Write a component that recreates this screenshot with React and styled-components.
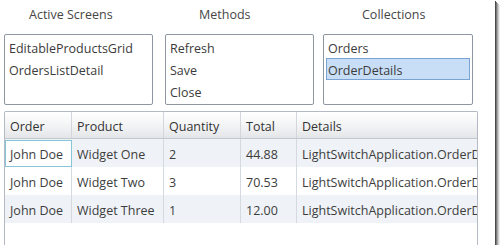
import React from "react";
import styled, { createGlobalStyle } from "styled-components";

const GlobalStyle = createGlobalStyle`
  body {
    margin: 0;
    background: #ffffff;
    font-family: "Open Sans", "Segoe UI", sans-serif;
    color: #3b3b3b;
  }
`;

const screens = ["EditableProductsGrid", "OrdersListDetail"];
const methods = ["Refresh", "Save", "Close"];
const collections = ["Orders", "OrderDetails"];

const columns = ["Order", "Product", "Quantity", "Total", "Details"];
const rows = [
  ["John Doe", "Widget One", "2", "44.88", "LightSwitchApplication.OrderDetails"],
  ["John Doe", "Widget Two", "3", "70.53", "LightSwitchApplication.OrderDetails"],
  ["John Doe", "Widget Three", "1", "12.00", "LightSwitchApplication.OrderDetails"],
];

class App extends React.Component {
  render() {
    return (
      <>
        <GlobalStyle />
        <Frame>
          <TopRow>
            <Section>
              <Label $indent={25}>Active Screens</Label>
              <ListBox>
                {screens.map((s) => (
                  <Item key={s}>{s}</Item>
                ))}
              </ListBox>
            </Section>
            <Section $gap={12}>
              <Label $indent={34}>Methods</Label>
              <ListBox>
                {methods.map((m) => (
                  <Item key={m}>{m}</Item>
                ))}
              </ListBox>
            </Section>
            <Section $gap={9} $wide>
              <Label $indent={39}>Collections</Label>
              <ListBox>
                {collections.map((c) => (
                  <Item key={c} $selected={c === "OrderDetails"}>
                    {c}
                  </Item>
                ))}
              </ListBox>
            </Section>
          </TopRow>

          <DataGrid>
            <HeaderRow>
              {columns.map((c) => (
                <HeaderCell key={c}>{c}</HeaderCell>
              ))}
            </HeaderRow>
            {rows.map((r, i) => (
              <Row key={i} $alt={i % 2 === 0}>
                {r.map((v, j) => (
                  <Cell key={j} $focused={i === 0 && j === 0}>
                    {v}
                  </Cell>
                ))}
              </Row>
            ))}
          </DataGrid>
        </Frame>
      </>
    );
  }
}

export default App;

const Frame = styled.div`
  width: 495px;
  height: 245px;
  box-sizing: border-box;
  overflow: hidden;
  background: #ffffff;
  box-shadow: 1px 1px 0 #4a4a4a, 2px 2px 0 #7a7a7a, 3px 3px 0 #a8a8a8,
    4px 4px 0 #d0d0d0, 5px 5px 0 #ececec;
  display: flex;
  flex-direction: column;
  font-size: 12.5px;
`;

const TopRow = styled.div`
  display: flex;
  padding-left: 4px;
`;

const Section = styled.div`
  display: flex;
  flex-direction: column;
  width: ${(p) => (p.$wide ? 150 : 149)}px;
  margin-left: ${(p) => p.$gap || 0}px;
`;

const Label = styled.div`
  height: 28px;
  line-height: 29px;
  padding-left: ${(p) => p.$indent}px;
  color: #464646;
  white-space: nowrap;
`;

const ListBox = styled.div`
  margin-top: 6px;
  height: 71px;
  box-sizing: border-box;
  border: 1px solid #8d96a1;
  border-radius: 2px;
  padding: 1px 2px;
  display: flex;
  flex-direction: column;
`;

const Item = styled.div`
  height: 22px;
  line-height: 23px;
  box-sizing: border-box;
  padding-left: 1px;
  border: 1px solid ${(p) => (p.$selected ? "#7aa3d3" : "transparent")};
  background: ${(p) => (p.$selected ? "#c8def7" : "transparent")};
  white-space: nowrap;
`;

const DataGrid = styled.div`
  margin: 6px 0 0 4px;
  width: 474px;
  flex: 1;
  box-sizing: border-box;
  border: 1px solid #b3bac4;
  border-bottom: none;
  border-radius: 2px 2px 0 0;
  overflow: hidden;
`;

const gridColumns = "67px 92px 77px 56px 180px";

const HeaderRow = styled.div`
  display: grid;
  grid-template-columns: ${gridColumns};
  height: 27px;
  box-sizing: border-box;
  border-bottom: 1px solid #c3c8cf;
  background: linear-gradient(#ffffff, #f2f3f4 55%, #e3e5e8);
`;

const HeaderCell = styled.div`
  box-sizing: border-box;
  border-right: 1px solid #d3d7dc;
  padding-left: 5px;
  line-height: 29px;
  color: #333333;
  white-space: nowrap;
  overflow: hidden;
  &:last-child {
    border-right: none;
  }
`;

const Row = styled.div`
  display: grid;
  grid-template-columns: ${gridColumns};
  height: 28px;
  background: ${(p) => (p.$alt ? "#eff2f7" : "#ffffff")};
`;

const Cell = styled.div`
  box-sizing: border-box;
  border-right: 1px solid #d5dae0;
  padding-left: 5px;
  line-height: 31px;
  white-space: nowrap;
  overflow: hidden;
  color: #3d3d3d;
  ${(p) =>
    p.$focused &&
    `
    background: #ffffff;
    outline: 1px solid #86c6d8;
    outline-offset: -1px;
    margin: 1px 0 0 0;
    line-height: 29px;
    height: 27px;
  `}
  &:last-child {
    border-right: none;
  }
`;
